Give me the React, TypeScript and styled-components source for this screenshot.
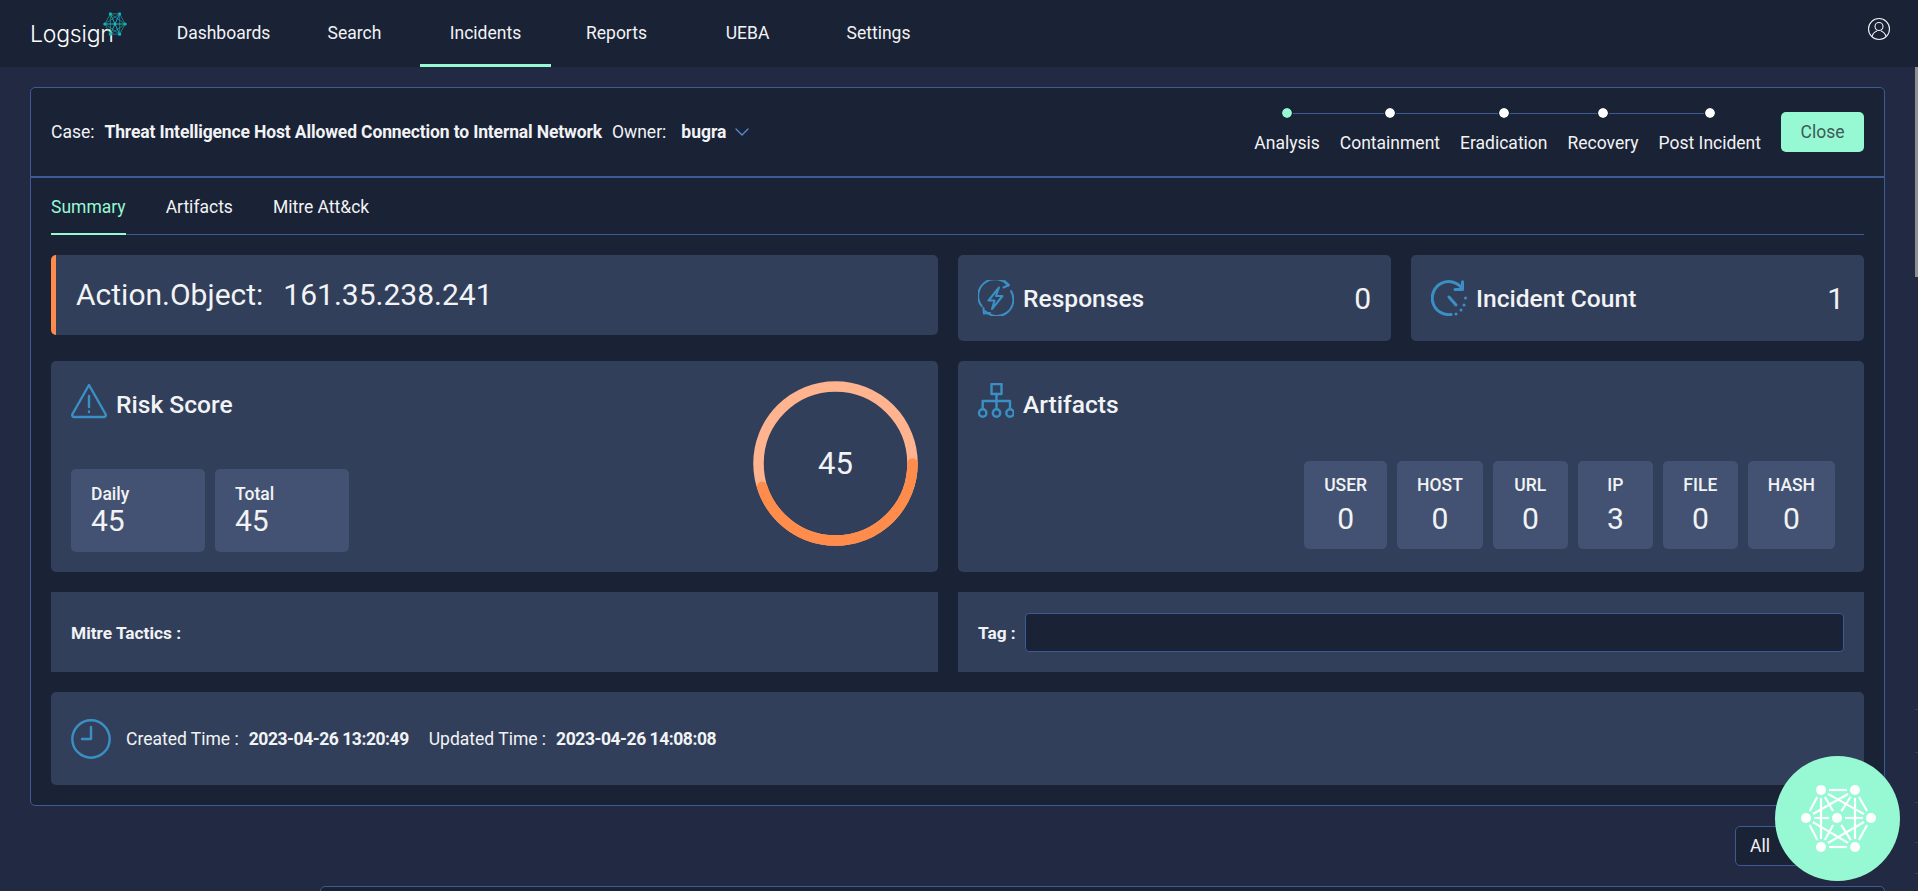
import React from 'react';
import styled, { createGlobalStyle } from 'styled-components';
import { ChevronDown } from 'lucide-react';

const mint = '#96f9d3';
const navy = '#1a2235';
const cardBg = '#323f5b';
const boxBg = '#435272';
const line = '#3d5a94';
const iconBlue = '#3a8fc5';
const textColor = '#f1f3f5';

const GlobalStyle = createGlobalStyle`
  html, body, #root {
    margin: 0;
    height: 100%;
  }
  body {
    background: #212a42;
    color: ${textColor};
    font-family: Roboto, "Liberation Sans", sans-serif;
    font-size: 17.5px;
    overflow: hidden;
  }
`;

const Shell = styled.div`
  display: flex;
  flex-direction: column;
  height: 100vh;
`;

const NavBar = styled.header`
  flex: 0 0 67px;
  display: flex;
  align-items: stretch;
  background: ${navy};
  padding-right: 27px;
`;

const LogoWrap = styled.div`
  position: relative;
  flex: 0 0 158px;
  padding: 21px 0 0 30px;
  box-sizing: border-box;
`;

const LogoText = styled.span`
  font-family: Inter, sans-serif;
  font-size: 23px;
  font-weight: 300;
  line-height: 26px;
  letter-spacing: -0.2px;
  color: #fff;
`;

const LogoMark = styled.svg`
  position: absolute;
  left: 103px;
  top: 12px;
  width: 24px;
  height: 24px;
`;

const NavItem = styled.a<{ $active?: boolean }>`
  flex: 0 0 131px;
  display: flex;
  align-items: center;
  justify-content: center;
  padding-bottom: 2px;
  box-sizing: border-box;
  color: ${textColor};
  font-size: 17.5px;
  border-bottom: 3px solid ${(p) => (p.$active ? mint : 'transparent')};
  border-top: 3px solid transparent;
`;

const UserButton = styled.div`
  margin-left: auto;
  display: flex;
  padding-top: 17px;
`;

const Scroller = styled.main`
  flex: 1;
  overflow: hidden;
  padding: 20px 33px 0 30px;
`;

const ScrollThumb = styled.div`
  position: fixed;
  top: 67px;
  right: 0;
  width: 3px;
  height: 210px;
  background: #8d8f94;
`;

const ScrollTick = styled.div<{ $top: number }>`
  position: fixed;
  top: ${(p) => p.$top}px;
  right: 0;
  width: 3px;
  height: 1px;
  background: #35405c;
`;

const CasePanel = styled.section`
  background: ${navy};
  border: 1px solid ${line};
  border-radius: 5px;
`;

const CaseHeader = styled.div`
  display: flex;
  align-items: center;
  height: 88px;
  padding: 0 20px;
  border-bottom: 2px solid ${line};
`;

const CaseLabel = styled.span`
  margin-right: 10px;
`;

const CaseTitle = styled.strong`
  font-weight: 700;
  letter-spacing: -0.14px;
  margin-right: 10px;
`;

const OwnerName = styled.strong`
  font-weight: 700;
  margin: 0 4px 0 5px;
`;

const Stepper = styled.div`
  display: flex;
  gap: 20px;
  margin: 0 20px 4px auto;
`;

const Step = styled.div`
  position: relative;
  display: flex;
  flex-direction: column;
  align-items: center;
  gap: 15px;

  /* half a connector on each side of the dot, meeting in the gap */
  &:not(:first-child)::before,
  &:not(:last-child)::after {
    content: '';
    position: absolute;
    top: 5px;
    height: 1px;
    background: ${line};
  }
  &:not(:first-child)::before {
    left: -10px;
    right: 50%;
  }
  &:not(:last-child)::after {
    left: 50%;
    right: -10px;
  }
`;

const StepDot = styled.span<{ $current?: boolean }>`
  position: relative;
  z-index: 1;
  width: 10px;
  height: 10px;
  border-radius: 50%;
  background: ${(p) => (p.$current ? mint : '#fff')};
  outline: 1px solid ${navy};
`;

const CloseButton = styled.button`
  width: 83px;
  height: 40px;
  border: 0;
  border-radius: 5px;
  background: ${mint};
  color: #3f5a58;
  font-family: inherit;
  font-size: 17.5px;
`;

const Tabs = styled.nav`
  display: flex;
  gap: 40px;
  margin: 0 20px;
  height: 56px;
  border-bottom: 1px solid ${line};
`;

const Tab = styled.a<{ $active?: boolean }>`
  display: flex;
  align-items: center;
  padding-top: 2px;
  color: ${(p) => (p.$active ? mint : textColor)};
  border-bottom: 2px solid ${(p) => (p.$active ? mint : 'transparent')};
  margin-bottom: -1px;
`;

const SummaryGrid = styled.div`
  display: grid;
  grid-template-columns: 887fr 906fr;
  gap: 20px;
  padding: 20px;
`;

const Card = styled.div`
  background: ${cardBg};
  border-radius: 5px;
`;

const ActionCard = styled(Card)`
  height: 80px;
  box-sizing: border-box;
  display: flex;
  align-items: center;
  gap: 20px;
  padding: 0 0 2px 20px;
  border-left: 5px solid #ff8c4a;
  font-size: 30px;
`;

const CounterRow = styled.div`
  display: grid;
  grid-template-columns: 433fr 453fr;
  gap: 20px;
`;

const CounterCard = styled(Card)`
  height: 86px;
  display: flex;
  align-items: center;
  gap: 9px;
  padding: 0 20px;
  box-sizing: border-box;
`;

const CardTitle = styled.h3`
  margin: 0;
  font-size: 24.6px;
  font-weight: 500;
`;

const CounterValue = styled.span`
  margin-left: auto;
  font-size: 30px;
`;

const RiskCard = styled(Card)`
  height: 211px;
  display: flex;
  justify-content: space-between;
  padding: 20px;
  box-sizing: border-box;
`;

const RiskLeft = styled.div`
  display: flex;
  flex-direction: column;
  justify-content: space-between;
`;

const TitleRow = styled.div`
  display: flex;
  align-items: center;
  gap: 9px;
  padding-top: 2px;

  ${CardTitle} {
    padding-top: 6px;
  }
`;

const StatRow = styled.div`
  display: flex;
  gap: 10px;
`;

const StatBox = styled.div`
  width: 134px;
  height: 83px;
  padding: 15px 20px 0;
  box-sizing: border-box;
  background: ${boxBg};
  border-radius: 5px;
`;

const StatLabel = styled.div`
  font-size: 17.5px;
  font-weight: 500;
  line-height: 20px;
`;

const StatValue = styled.div`
  font-size: 30px;
  line-height: 34px;
`;

const Gauge = styled.div`
  position: relative;
  width: 165px;
  height: 165px;
`;

const GaugeValue = styled.span`
  position: absolute;
  inset: 0;
  display: flex;
  align-items: center;
  justify-content: center;
  font-size: 31px;
`;

const ArtifactCard = styled(Card)`
  height: 211px;
  display: flex;
  flex-direction: column;
  justify-content: space-between;
  padding: 20px 29px 23px 20px;
  box-sizing: border-box;
`;

const ArtifactRow = styled.div`
  display: flex;
  justify-content: flex-end;
  gap: 10px;
`;

const ArtifactBox = styled.div`
  min-width: 75px;
  height: 88px;
  padding: 12px 20px 0;
  box-sizing: border-box;
  background: ${boxBg};
  border-radius: 5px;
  text-align: center;
`;

const ArtifactLabel = styled.div`
  font-size: 17.5px;
  font-weight: 500;
  line-height: 24px;
`;

const ArtifactValue = styled.div`
  margin-top: 4px;
  font-size: 30px;
  line-height: 36px;
`;

const PlainCard = styled.div`
  height: 80px;
  display: flex;
  align-items: center;
  gap: 9px;
  padding: 0 20px;
  background: ${cardBg};
`;

const FieldLabel = styled.strong`
  padding-top: 1px;
  font-size: 17.3px;
  font-weight: 700;
  white-space: nowrap;
`;

const TagInput = styled.div`
  flex: 1;
  height: 39px;
  box-sizing: border-box;
  background: ${navy};
  border: 1px solid ${line};
  border-radius: 4px;
`;

const TimeCard = styled(Card)`
  grid-column: 1 / -1;
  height: 93px;
  display: flex;
  align-items: center;
  padding: 0 20px;
`;

const TimeLabel = styled.span`
  margin-right: 10px;
`;

const TimeValue = styled.strong`
  margin-right: 20px;
  font-weight: 700;
  letter-spacing: -0.45px;
`;

const FilterRow = styled.div`
  display: flex;
  justify-content: flex-end;
  margin: 20px 20px 20px 0;
`;

const FilterSelect = styled.div`
  width: 130px;
  height: 40px;
  box-sizing: border-box;
  display: flex;
  align-items: center;
  padding-left: 14px;
  background: ${navy};
  border: 1px solid ${line};
  border-radius: 5px;
`;

const EventsPanel = styled.section`
  margin-left: 290px;
  height: 2400px;
  background: ${navy};
  border: 1px solid ${line};
  border-radius: 5px;
`;

const AssistantButton = styled.button`
  position: fixed;
  left: 1775px;
  top: 756px;
  width: 125px;
  height: 125px;
  padding: 0;
  border: 0;
  border-radius: 50%;
  background: ${mint};
  display: flex;
  align-items: center;
  justify-content: center;
`;

const IconSvg = styled.svg`
  flex: none;
  fill: none;
  stroke: ${iconBlue};
  stroke-width: 2.4;
  stroke-linecap: round;
  stroke-linejoin: round;
`;

const RiskIcon = () => (
  <IconSvg width="36" height="36" viewBox="0 0 36 36">
    <path d="M18 2 L34.5 31 a2 2 0 0 1 -1.8 3 H3.3 a2 2 0 0 1 -1.8 -3 Z" />
    <path d="M18 13 V24 M18 28.5 V29" />
  </IconSvg>
);

const ResponsesIcon = () => (
  <IconSvg width="36" height="36" viewBox="0 0 36 36" style={{ strokeWidth: 2 }}>
    <path d="M3.7 26.2 A16.5 16.5 0 0 1 30 5.6" />
    <path d="M26.5 1 L31 5 L25.5 7.5" />
    <path d="M33 11 A16.5 16.5 0 0 1 7 31" />
    <path d="M5.5 28 L5.8 33.5 L12 33" />
    <path d="M21 7.5 L10.5 20.5 H16.5 L14 29 L24.5 16 H18 Z" />
  </IconSvg>
);

const IncidentIcon = () => (
  <IconSvg width="36" height="36" viewBox="0 0 36 36" style={{ strokeWidth: 3 }}>
    <path d="M20 34.5 A16.5 16.5 0 1 1 31.5 9" />
    <path d="M31.5 1.8 V9.5 H24" />
    <path d="M18 17 L25 25" />
    <path d="M25 34 V34.1 M30 30 V30.1 M33 25 V25.1 M34.5 18 V18.1" />
  </IconSvg>
);

const ArtifactsIcon = () => (
  <IconSvg width="36" height="36" viewBox="0 0 36 36">
    <rect x="13.5" y="1" width="10" height="10" />
    <path d="M18.5 11 V25 M4.7 25 V18 H32 V25" />
    <circle cx="4.7" cy="30" r="3.7" />
    <circle cx="18.5" cy="30" r="3.7" />
    <circle cx="32" cy="30" r="3.7" />
  </IconSvg>
);

const ClockIcon = () => (
  <IconSvg width="40" height="40" viewBox="0 0 40 40" style={{ marginRight: 15 }}>
    <circle cx="20" cy="20" r="18.7" />
    <path d="M20 8 V20 H11" />
  </IconSvg>
);

const UserIcon = () => (
  <svg width="24" height="24" viewBox="0 0 24 24" fill="none" stroke="#f1f3f5" strokeWidth="1.1">
    <circle cx="12" cy="12" r="10.5" />
    <circle cx="12" cy="9.5" r="4" />
    <path d="M5 19.5 C6 16 8.5 14.5 10 14 M19 19.5 C18 16 15.5 14.5 14 14" />
  </svg>
);

const markNodes: [number, number][] = [
  [8, 2], [18, 2], [24, 13], [18, 24], [8, 24], [2, 13], [13, 13],
];

const LogoIcon = () => (
  <LogoMark viewBox="0 0 26 26">
    {markNodes.map(([x, y], i) =>
      markNodes.slice(i + 1).map(([x2, y2], j) => (
        <line key={`${i}-${j}`} x1={x} y1={y} x2={x2} y2={y2} stroke={i % 2 ? '#1f9fd0' : '#1bb58f'} strokeWidth="0.7" />
      ))
    )}
    {markNodes.map(([x, y], i) => (
      <circle key={i} cx={x} cy={y} r="1.7" fill="#16b5b8" />
    ))}
  </LogoMark>
);

const netNodes: [number, number][] = [
  [28, 7], [62, 7], [13, 35], [44, 35], [78, 35], [28, 64], [62, 64],
];
const hubIndex = 3;

// nodes link up pairwise, except that lines through the hub stop at it,
// and each line ends short of the node it meets
const trimmedEdges = netNodes.flatMap(([x1, y1], i) =>
  netNodes.slice(i + 1).flatMap(([x2, y2], offset) => {
    const j = i + 1 + offset;
    const throughHub = i !== hubIndex && j !== hubIndex && i + j === 6;
    if (throughHub) return [];
    const len = Math.hypot(x2 - x1, y2 - y1);
    const ux = (x2 - x1) / len;
    const uy = (y2 - y1) / len;
    return [{ x1: x1 + ux * 8, y1: y1 + uy * 8, x2: x2 - ux * 8, y2: y2 - uy * 8 }];
  })
);

const NetworkIcon = () => (
  <svg width="90" height="72" viewBox="0 0 90 72">
    {trimmedEdges.map((e, i) => (
      <line key={i} {...e} stroke="#fff" strokeWidth="2.2" />
    ))}
    {netNodes.map(([x, y], i) => (
      <circle key={i} cx={x} cy={y} r="5" fill="#fff" />
    ))}
  </svg>
);

const RiskGauge: React.FC<{ value: number }> = ({ value }) => {
  const radius = 77;
  const circumference = 2 * Math.PI * radius;
  return (
    <Gauge>
      <svg width="165" height="165" viewBox="0 0 165 165">
        <circle cx="82.5" cy="82.5" r={radius} fill="none" stroke="#ffb48f" strokeWidth="10.5" />
        <circle
          cx="82.5"
          cy="82.5"
          r={radius}
          fill="none"
          stroke="#ff8c4a"
          strokeWidth="10.5"
          strokeLinecap="round"
          strokeDasharray={`${(circumference * value) / 100} ${circumference}`}
        />
      </svg>
      <GaugeValue>{value}</GaugeValue>
    </Gauge>
  );
};

const navLinks = ['Dashboards', 'Search', 'Incidents', 'Reports', 'UEBA', 'Settings'];
const phases = ['Analysis', 'Containment', 'Eradication', 'Recovery', 'Post Incident'];
const artifactCounts = [
  ['USER', 0],
  ['HOST', 0],
  ['URL', 0],
  ['IP', 3],
  ['FILE', 0],
  ['HASH', 0],
] as const;
const scrollTicks = [709, 752, 802, 842, 873];

const App: React.FC = () => {
  return (
    <Shell>
      <GlobalStyle />
      <NavBar>
        <LogoWrap>
          <LogoText>Logsign</LogoText>
          <LogoIcon />
        </LogoWrap>
        {navLinks.map((link) => (
          <NavItem key={link} $active={link === 'Incidents'}>
            {link}
          </NavItem>
        ))}
        <UserButton>
          <UserIcon />
        </UserButton>
      </NavBar>
      <Scroller>
        <CasePanel>
          <CaseHeader>
            <CaseLabel>Case:</CaseLabel>
            <CaseTitle>Threat Intelligence Host Allowed Connection to Internal Network</CaseTitle>
            <CaseLabel>Owner:</CaseLabel>
            <OwnerName>bugra</OwnerName>
            <ChevronDown size={24} color="#5b8fd6" strokeWidth={1.2} />
            <Stepper>
              {phases.map((phase, i) => (
                <Step key={phase}>
                  <StepDot $current={i === 0} />
                  {phase}
                </Step>
              ))}
            </Stepper>
            <CloseButton>Close</CloseButton>
          </CaseHeader>
          <Tabs>
            <Tab $active>Summary</Tab>
            <Tab>Artifacts</Tab>
            <Tab>Mitre Att&amp;ck</Tab>
          </Tabs>
          <SummaryGrid>
            <ActionCard>
              <span>Action.Object:</span>
              <span>161.35.238.241</span>
            </ActionCard>
            <CounterRow>
              <CounterCard>
                <ResponsesIcon />
                <CardTitle>Responses</CardTitle>
                <CounterValue>0</CounterValue>
              </CounterCard>
              <CounterCard>
                <IncidentIcon />
                <CardTitle>Incident Count</CardTitle>
                <CounterValue>1</CounterValue>
              </CounterCard>
            </CounterRow>
            <RiskCard>
              <RiskLeft>
                <TitleRow>
                  <RiskIcon />
                  <CardTitle>Risk Score</CardTitle>
                </TitleRow>
                <StatRow>
                  <StatBox>
                    <StatLabel>Daily</StatLabel>
                    <StatValue>45</StatValue>
                  </StatBox>
                  <StatBox>
                    <StatLabel>Total</StatLabel>
                    <StatValue>45</StatValue>
                  </StatBox>
                </StatRow>
              </RiskLeft>
              <RiskGauge value={45} />
            </RiskCard>
            <ArtifactCard>
              <TitleRow>
                <ArtifactsIcon />
                <CardTitle>Artifacts</CardTitle>
              </TitleRow>
              <ArtifactRow>
                {artifactCounts.map(([label, count]) => (
                  <ArtifactBox key={label}>
                    <ArtifactLabel>{label}</ArtifactLabel>
                    <ArtifactValue>{count}</ArtifactValue>
                  </ArtifactBox>
                ))}
              </ArtifactRow>
            </ArtifactCard>
            <PlainCard>
              <FieldLabel>Mitre Tactics :</FieldLabel>
            </PlainCard>
            <PlainCard>
              <FieldLabel>Tag :</FieldLabel>
              <TagInput />
            </PlainCard>
            <TimeCard>
              <ClockIcon />
              <TimeLabel>Created Time :</TimeLabel>
              <TimeValue>2023-04-26 13:20:49</TimeValue>
              <TimeLabel>Updated Time :</TimeLabel>
              <TimeValue>2023-04-26 14:08:08</TimeValue>
            </TimeCard>
          </SummaryGrid>
        </CasePanel>
        <FilterRow>
          <FilterSelect>All</FilterSelect>
        </FilterRow>
        <EventsPanel />
      </Scroller>
      <ScrollThumb />
      {scrollTicks.map((top) => (
        <ScrollTick key={top} $top={top} />
      ))}
      <AssistantButton>
        <NetworkIcon />
      </AssistantButton>
    </Shell>
  );
};

export default App;
